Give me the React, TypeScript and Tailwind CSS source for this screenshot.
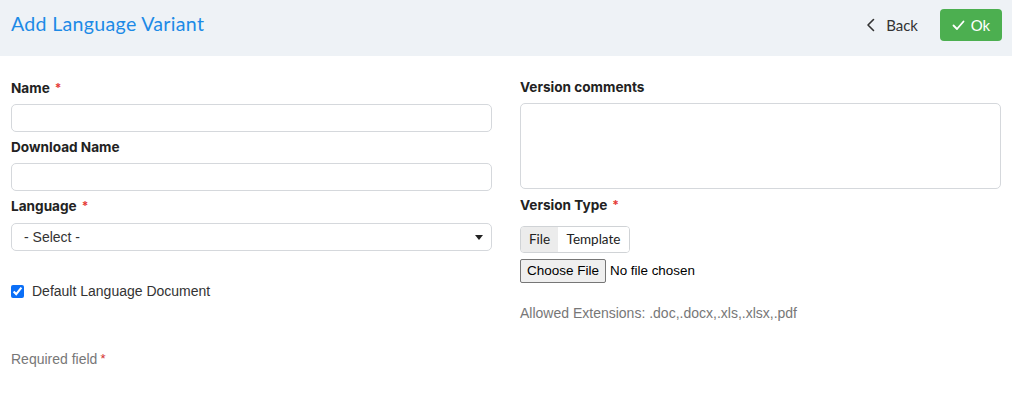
import React from 'react';

const Label: React.FC<{ text: string; required?: boolean; className?: string }> = ({ text, required, className }) => (
  <div className={`h-5 flex items-center text-[13.6px] font-bold text-[#222] font-['Inter',sans-serif] ${className ?? ''}`}>
    {text}
    {required && <span className="ml-[5px] text-[#e53935] text-[12px]">*</span>}
  </div>
);

const App: React.FC = () => {
  return (
    <div className="w-[1012px] h-[403px] bg-white font-['Liberation_Sans',Arial,sans-serif]">
      {/* Header */}
      <header className="h-14 bg-[#eef2f6] pl-[11px] pr-[10px] flex items-start justify-between">
        <h1 className="mt-[9px] text-[19.6px] text-[#1c8ae6] font-['Lato',sans-serif] tracking-[0.3px]">
          Add Language Variant
        </h1>
        <div className="flex items-center mt-[9px] h-8">
          <button className="flex items-center text-[15px] text-[#333] font-['Lato',sans-serif] mr-[22px]">
            <svg width="10" height="14" viewBox="0 0 10 14" className="mr-[10px]">
              <path d="M7.5 1.5 L2 7 L7.5 12.5" fill="none" stroke="#333" strokeWidth="1.6" strokeLinecap="round" strokeLinejoin="round" />
            </svg>
            Back
          </button>
          <button className="w-[62px] h-8 rounded-[4px] bg-[#4caf50] text-white text-[15px] font-['Lato',sans-serif] flex items-center justify-center">
            <svg width="13" height="11" viewBox="0 0 13 11" className="mr-[6px]">
              <path d="M1.5 5.5 L5 9 L11.5 1.5" fill="none" stroke="#fff" strokeWidth="1.8" strokeLinecap="round" strokeLinejoin="round" />
            </svg>
            Ok
          </button>
        </div>
      </header>

      {/* Form */}
      <div className="px-[11px] grid grid-cols-2 gap-x-[28px]">
        {/* Left column */}
        <div className="pt-[22px]">
          <Label text="Name" required />
          <div className="mt-[6px] h-7 rounded-[5px] border border-[#d5d8dc] bg-white" />
          <Label text="Download Name" className="mt-[5px]" />
          <div className="mt-[6px] h-7 rounded-[5px] border border-[#d5d8dc] bg-white" />
          <Label text="Language" required className="mt-[5px]" />
          <div className="mt-[7px] h-7 rounded-[5px] border border-[#d5d8dc] bg-white flex items-center justify-between pl-[12px] pr-[8px] text-[14px] text-[#333]">
            <span>- Select -</span>
            <svg width="8" height="5" viewBox="0 0 8 5">
              <path d="M0 0 H8 L4 5 Z" fill="#222" />
            </svg>
          </div>
          <label className="mt-[30px] h-5 flex items-center text-[14px] text-[#333]">
            <input type="checkbox" defaultChecked className="w-[13px] h-[13px] m-0 mr-[8px] accent-[#0b6ff7]" />
            Default Language Document
          </label>
          <div className="mt-[48px] h-5 flex items-center text-[14px] text-[#777]">
            Required field
            <span className="ml-[3px] text-[#d32f2f] text-[13px]">*</span>
          </div>
        </div>

        {/* Right column */}
        <div className="pt-[21px]">
          <Label text="Version comments" />
          <div className="mt-[6px] h-[86px] rounded-[5px] border border-[#d5d8dc] bg-white" />
          <Label text="Version Type" required className="mt-[6px]" />
          <div className="mt-[11px] inline-flex h-[27px] rounded-[4px] border border-[#d0d3d6] overflow-hidden text-[13.5px] text-[#222] font-['Lato',sans-serif]">
            <span className="w-[37px] bg-[#ececec] flex items-center justify-center">File</span>
            <span className="w-[71px] bg-white flex items-center justify-center">Template</span>
          </div>
          <div className="mt-[6px] flex items-center h-6 text-[13.4px] text-black">
            <span className="h-6 w-[86px] rounded-[2px] border border-[#767676] bg-[#efefef] flex items-center justify-center text-[13.5px]">
              Choose File
            </span>
            <span className="ml-[4px]">No file chosen</span>
          </div>
          <div className="mt-[20px] h-5 flex items-center text-[14px] text-[#777]">
            Allowed Extensions: .doc,.docx,.xls,.xlsx,.pdf
          </div>
        </div>
      </div>
    </div>
  );
};

export default App;
